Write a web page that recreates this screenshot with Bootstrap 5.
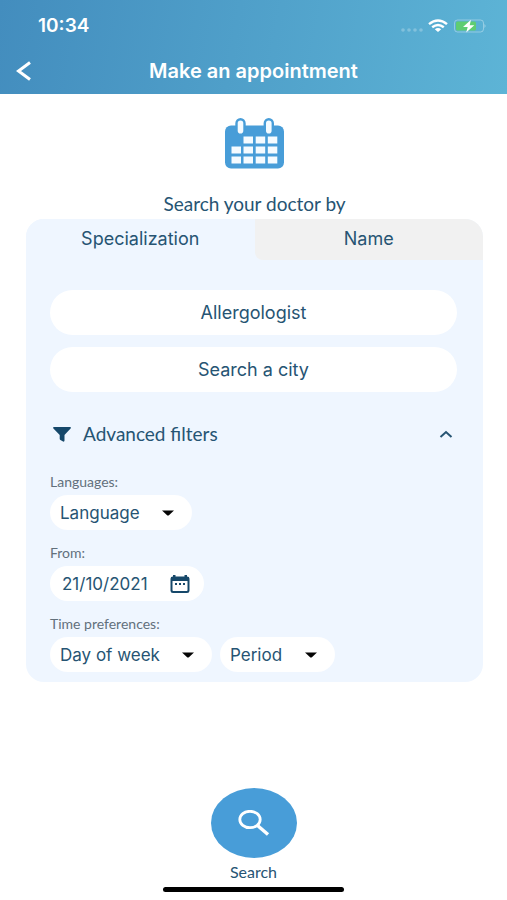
<!DOCTYPE html>
<html lang="en">
<head>
<meta charset="utf-8">
<meta name="viewport" content="width=device-width, initial-scale=1">
<title>Make an appointment</title>
<link href="https://cdn.jsdelivr.net/npm/bootstrap@5.3.0/dist/css/bootstrap.min.css" rel="stylesheet">
<style>
  body { font-family: Inter, "Liberation Sans", sans-serif; color: #265473; background: #fff; }
  .humanist { font-family: Lato, "Open Sans", sans-serif; font-weight: 400; }
  svg { display: block; }
  .app-header { background: linear-gradient(100deg, #438dbe, #5db4d6); height: 94px; }
  .status-row { height: 50px; padding: 2px 21px 0 38px; font-size: 19px; }
  .title-row { height: 42px; }
  .title-row h1 { font-size: 20px; }
  .back-btn { padding: 0 16px; }
  .page-main { padding: 24px 24px 0 26px; }
  .heading { font-size: 19px; line-height: 24px; margin: 22px 0 3px; }
  .search-panel { background: #eff6ff; border-radius: 18px; overflow: hidden; }
  .search-panel .tab-btn { height: 41px; font-size: 18px; line-height: 24px; color: #265473; border-radius: 0; padding: 0 0 2px; background: #eff6ff; }
  .search-panel .tab-btn.idle { background: #f1f1f1; border-bottom-left-radius: 8px; }
  .panel-body { padding: 30px 26px 10px 24px; }
  .field-stack { gap: 12px; }
  .field { height: 45px; border: 0; border-radius: 23px; font-size: 18px; color: #265473; text-align: center; }
  .field::placeholder { color: #265473; opacity: 1; }
  .filters-btn { height: 30px; margin: 27px 0 24px; padding: 0 4px 0 3px; font-size: 19px; color: #265473; }
  .filter-stack { gap: 14px; }
  .small-label { font-size: 14px; line-height: 18px; color: #62707c; margin-bottom: 4px; }
  .pill { height: 35px; border: 0; border-radius: 18px; font-size: 17px; line-height: 24px; color: #265473; background-color: #fff; }
  .pill-select { width: auto; padding: 0 52px 0 10px; background-size: 12px 6px; background-position: right 18px center;
    background-image: url("data:image/svg+xml,%3Csvg xmlns='http://www.w3.org/2000/svg' viewBox='0 0 12 6'%3E%3Cpath d='M0 .5h12L7.2 5q-1.2 1-2.4 0z' fill='%23050505'/%3E%3C/svg%3E"); }
  .date-pill { width: 154px; padding: 0 14px 0 12px; }
  .date-pill input { font-size: 17px; color: #265473; min-width: 0; }
  .search-btn { width: 86px; height: 70px; border-radius: 50%; background: #489dd8; }
  .search-caption { font-size: 16px; line-height: 20px; margin-top: 4px; }
  .home-bar { width: 181px; height: 5px; border-radius: 3px; background: #000; margin: 5px 0 8px; }
</style>
<script src="https://cdn.jsdelivr.net/npm/bootstrap@5.3.0/dist/js/bootstrap.bundle.min.js"></script>
</head>
<body>
<div class="d-flex flex-column min-vh-100">
  <header class="app-header text-white">
    <div class="status-row d-flex align-items-center justify-content-between fw-semibold">
      <span>10:34</span>
      <div class="d-flex align-items-center">
        <svg width="24" height="14" viewBox="0 0 24 14" fill="#fff" fill-opacity=".25" aria-hidden="true"><circle cx="3" cy="11" r="1.800"/><circle cx="9" cy="11" r="1.800"/><circle cx="15" cy="11" r="1.800"/><circle cx="21" cy="11" r="1.800"/></svg>
        <svg class="ms-1" width="20" height="14" viewBox="0 0 20 14" fill="none" stroke="#fff" stroke-width="2.400" aria-hidden="true"><path d="M1 5.200Q10-2.400 19 5.200M4.200 8.300Q10 3.700 15.800 8.300"/><path d="M6.800 10.200Q10 7.800 13.200 10.200L10 13z" fill="#fff" stroke="none"/></svg>
        <svg class="ms-1" width="34" height="14" viewBox="0 0 34 14" aria-hidden="true"><rect x="2.500" y="1" width="29" height="12" rx="3" fill="none" stroke="#fff" stroke-opacity=".35"/><rect x="4" y="2.500" width="20" height="9" rx="1.500" fill="#5fcd72"/><path d="M32.500 5q2 2 0 4z" fill="#fff" fill-opacity=".45"/><path d="M19 .8 11 7.900h4.700L14.200 13.400 22.300 6.200h-4.600z" fill="#fff"/></svg>
      </div>
    </div>
    <div class="title-row row g-0 align-items-center">
      <div class="col-2 d-flex"><button class="btn back-btn border-0" type="button" aria-label="Back"><svg width="16" height="20" viewBox="0 0 16 20" fill="none" stroke="#fff" stroke-width="3"><path d="M14 1.500 2.500 10 14 18.500"/></svg></button></div>
      <h1 class="col-8 text-center fw-semibold mb-0">Make an appointment</h1>
    </div>
  </header>

  <main class="page-main">
    <svg class="mx-auto" width="60" height="52" viewBox="0 0 60 52" aria-hidden="true">
      <rect x="0" y="7.500" width="59" height="43" rx="6" fill="#489dd8"/>
      <g fill="#f5fbff" stroke="#489dd8" stroke-width="2.400"><rect x="11.500" y="1.200" width="8" height="15.500" rx="4"/><rect x="39.800" y="1.200" width="8" height="15.500" rx="4"/></g>
      <g fill="#f5fbff"><path d="M18.500 18.500h9.500v7h-9.500zM30.700 18.500h9.500v7h-9.500zM42.800 18.500h9.500v7h-9.500zM6.500 28.500H16v7H6.500zM18.500 28.500h9.500v7h-9.500zM30.700 28.500h9.500v7h-9.500zM42.800 28.500h9.500v7h-9.500zM6.500 38.500H16v7H6.500zM18.500 38.500h9.500v7h-9.500zM30.700 38.500h9.500v7h-9.500zM42.800 38.500h9.500v7h-9.500z"/></g>
    </svg>
    <h2 class="heading humanist text-center">Search your doctor by</h2>

    <section class="search-panel">
      <div class="row g-0" role="tablist">
        <button class="btn tab-btn col-6 border-0" type="button" role="tab" aria-selected="true">Specialization</button>
        <button class="btn tab-btn idle col-6 border-0" type="button" role="tab" aria-selected="false">Name</button>
      </div>
      <form class="panel-body">
        <div class="field-stack d-grid">
          <input class="form-control field" type="text" value="Allergologist" aria-label="Specialization">
          <input class="form-control field" type="text" placeholder="Search a city" aria-label="City">
        </div>
        <button class="btn filters-btn humanist border-0 d-flex align-items-center w-100" type="button" aria-expanded="true">
          <svg width="18" height="15" viewBox="0 0 18 15" fill="#16486a" aria-hidden="true"><path d="M1 0h16q1.500.4.6 1.600L11.500 8v5.600q0 1.400-1.400 1L7.400 13q-.7-.5-.7-1.200V8L.4 1.600Q-.5.4 1 0z"/></svg>
          <span class="ms-2 ps-1">Advanced filters</span>
          <svg class="ms-auto" width="14" height="8" viewBox="0 0 14 8" fill="none" stroke="#265473" stroke-width="2" aria-hidden="true"><path d="M1.500 7 7 2l5.500 5"/></svg>
        </button>
        <div class="filter-stack d-flex flex-column">
          <div>
            <label class="small-label humanist d-block" for="lang">Languages:</label>
            <select class="form-select pill pill-select" id="lang"><option>Language</option></select>
          </div>
          <div>
            <label class="small-label humanist d-block" for="from">From:</label>
            <div class="pill date-pill d-flex align-items-center">
              <input class="border-0 p-0 bg-transparent flex-fill" id="from" type="text" size="10" value="21/10/2021">
              <button class="btn border-0 p-0" type="button" aria-label="Choose date"><svg width="20" height="18" viewBox="0 0 20 18"><path fill="#16486a" fill-rule="evenodd" d="M3 0h2.500v1.500h9V0H17v1.500q2.500 0 2.500 2.200v12Q19.500 18 17 18H3Q.5 18 .5 15.700v-12Q.5 1.500 3 1.500zM2.500 6v9.200q0 .8.800.8h13.400q.8 0 .8-.8V6z"/><path fill="#16486a" d="M5 8h2v2H5zM9 8h2v2H9zM13 8h2v2h-2z"/></svg></button>
            </div>
          </div>
          <div>
            <label class="small-label humanist d-block" for="day">Time preferences:</label>
            <div class="d-flex gap-2">
              <select class="form-select pill pill-select" id="day"><option>Day of week</option></select>
              <select class="form-select pill pill-select" aria-label="Period"><option>Period</option></select>
            </div>
          </div>
        </div>
      </form>
    </section>
  </main>

  <footer class="mt-auto d-flex flex-column align-items-center">
    <button class="btn search-btn border-0 p-0 d-flex align-items-center justify-content-center" id="go" type="button" aria-labelledby="go-text">
      <svg width="32" height="26" viewBox="0 0 32 26" fill="none" stroke="#fff" aria-hidden="true"><ellipse cx="12" cy="9.500" rx="10.200" ry="8.200" stroke-width="2.800"/><path d="M19.500 15.500 30 24.500" stroke-width="3.400"/></svg>
    </button>
    <label class="search-caption humanist" id="go-text" for="go">Search</label>
    <div class="home-bar"></div>
  </footer>
</div>
</body>
</html>
